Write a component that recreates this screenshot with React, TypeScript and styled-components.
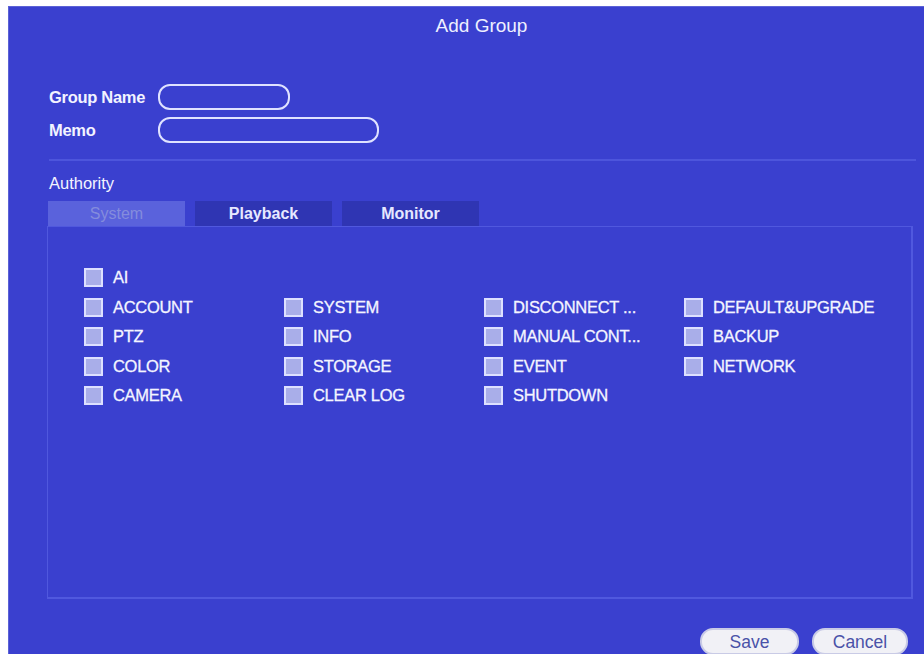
import React from 'react';
import styled, { createGlobalStyle } from 'styled-components';

const COLUMNS: string[][] = [
  ['ACCOUNT', 'PTZ', 'COLOR', 'CAMERA'],
  ['SYSTEM', 'INFO', 'STORAGE', 'CLEAR LOG'],
  ['DISCONNECT ...', 'MANUAL CONT...', 'EVENT', 'SHUTDOWN'],
  ['DEFAULT&UPGRADE', 'BACKUP', 'NETWORK'],
];

const TABS = [
  { key: 'system', label: 'System' },
  { key: 'playback', label: 'Playback' },
  { key: 'monitor', label: 'Monitor' },
];

const GlobalStyle = createGlobalStyle`
  html, body {
    margin: 0;
    padding: 0;
    background: #fff;
  }
  body {
    font-family: "Liberation Sans", Arial, sans-serif;
  }
`;

const Check = ({ label }: { label: string }) => (
  <CheckRow>
    <Box />
    <CheckLabel>{label}</CheckLabel>
  </CheckRow>
);

const App = () => {
  // rows are laid out row by row, so pick the n-th item of every column
  const rows = [0, 1, 2, 3].map((r) => COLUMNS.map((col) => col[r]));

  return (
    <Page>
      <GlobalStyle />
      <Dialog>
        <Title>Add Group</Title>
        <Form>
          <Field>
            <Label>Group Name</Label>
            <Input $width={132} />
          </Field>
          <Field>
            <Label>Memo</Label>
            <Input $width={221} />
          </Field>
        </Form>
        <Separator />
        <Section>Authority</Section>
        <Tabs>
          {TABS.map(({ key, label }) => (
            <Tab key={key} $active={key === 'system'}>
              {label}
            </Tab>
          ))}
        </Tabs>
        <Panel>
          <Grid>
            <Check label="AI" />
            <span />
            <span />
            <span />
            {rows.map((row, r) =>
              row.map((label, c) =>
                label ? <Check key={`${r}-${c}`} label={label} /> : <span key={`${r}-${c}`} />,
              ),
            )}
          </Grid>
        </Panel>
        <Footer>
          <Button $width={99}>Save</Button>
          <Button $width={96}>Cancel</Button>
        </Footer>
      </Dialog>
    </Page>
  );
};

export default App;

const Page = styled.div`
  width: 924px;
  height: 654px;
  padding: 6px 0 0 8px;
  box-sizing: border-box;
  overflow: hidden;
`;

const Dialog = styled.div`
  display: flex;
  flex-direction: column;
  height: 660px;
  background: #3a40cf;
  border-left: 1px solid #5c62d6;
  border-top: 1px solid #5c62d6;
  color: #f2f3ff;
  padding: 0 12px 0 38px;
  box-sizing: border-box;
`;

const Title = styled.div`
  height: 37px;
  line-height: 37px;
  text-align: center;
  padding-left: 4px;
  font-size: 19px;
  color: #eef0ff;
`;

const Form = styled.div`
  display: flex;
  flex-direction: column;
  gap: 7px;
  margin-top: 40px;
  padding-left: 2px;
`;

const Field = styled.div`
  display: flex;
  align-items: center;
  height: 26px;
`;

const Label = styled.span`
  width: 109px;
  font-size: 16.5px;
  font-weight: bold;
  letter-spacing: -0.3px;
`;

const Input = styled.div<{ $width: number }>`
  width: ${({ $width }) => $width}px;
  height: 26px;
  box-sizing: border-box;
  border: 2px solid #dfe2ff;
  border-radius: 12px;
`;

const Separator = styled.div`
  height: 2px;
  margin: 16px -4px 0 2px;
  background: #4d55dc;
`;

const Section = styled.div`
  margin-top: 12px;
  height: 20px;
  line-height: 20px;
  font-size: 16.5px;
  padding-left: 2px;
`;

const Tabs = styled.div`
  display: flex;
  gap: 10px;
  margin-top: 8px;
  padding-left: 1px;
`;

const Tab = styled.div<{ $active: boolean }>`
  width: 137px;
  height: 25px;
  line-height: 25px;
  text-align: center;
  font-size: 16px;
  font-weight: ${({ $active }) => ($active ? 'normal' : 'bold')};
  background: ${({ $active }) => ($active ? '#5a62dc' : '#2f35b3')};
  color: ${({ $active }) => ($active ? '#848cdc' : '#e6e8ff')};
`;

const Panel = styled.div`
  height: 373px;
  box-sizing: border-box;
  border: 1px solid #5058de;
  border-right-width: 2px;
  border-bottom-width: 2px;
  margin-right: -1px;
`;

const Grid = styled.div`
  display: grid;
  grid-template-columns: repeat(4, 200px);
  grid-auto-rows: 29.5px;
  padding: 36px 0 0 36px;
`;

const CheckRow = styled.div`
  display: flex;
  align-items: center;
  gap: 10px;
`;

const Box = styled.span`
  width: 19px;
  height: 19px;
  box-sizing: border-box;
  border: 2px solid #dde0ff;
  background: #a9aee9;
  flex-shrink: 0;
`;

const CheckLabel = styled.span`
  font-size: 16.5px;
  letter-spacing: -0.3px;
  color: #f4f5ff;
  white-space: nowrap;
  -webkit-text-stroke: 0.3px #f4f5ff;
`;

const Footer = styled.div`
  display: flex;
  justify-content: flex-end;
  gap: 13px;
  margin-top: 29px;
  padding-right: 4px;
`;

const Button = styled.div<{ $width: number }>`
  width: ${({ $width }) => $width}px;
  height: 27px;
  box-sizing: border-box;
  border: 2px solid #c9cbe6;
  border-radius: 13px;
  background: #f1f1f6;
  color: #4a52a8;
  font-size: 17.5px;
  line-height: 24px;
  text-align: center;
`;
